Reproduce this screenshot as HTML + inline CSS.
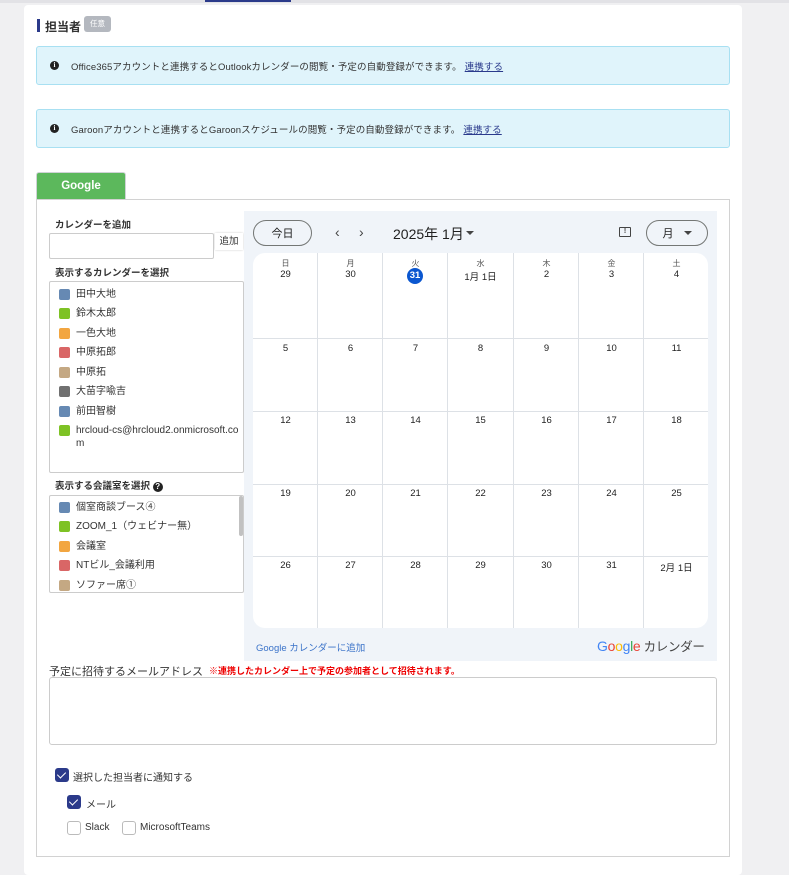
<!DOCTYPE html>
<html><head><meta charset="utf-8"><style>
*{box-sizing:border-box;margin:0;padding:0}
body{width:789px;height:867px;background:#f0f0f2;font-family:"Liberation Sans","Noto Sans CJK JP",sans-serif;color:#333;position:relative;overflow:hidden;font-size:10px}
.a{position:absolute}
.card{left:24px;top:5px;width:718px;height:870px;background:#fff;border-radius:4px}
.info{left:36px;width:694px;height:39px;background:#e0f4fb;border:1px solid #a8e0f2;border-radius:3px;font-size:9.5px;letter-spacing:0.1px;color:#333;padding-left:13px;display:flex;align-items:center}
.info i{display:inline-block;width:9px;height:9px;border-radius:50%;background:#222;color:#fff;font-style:normal;font-size:7px;font-weight:bold;text-align:center;line-height:9px;margin-right:12px;font-family:"Liberation Serif",serif}
.info a{color:#2a3a8c;text-decoration:underline;margin-left:3px}
.lbl{font-size:9.5px;font-weight:bold;color:#333}
.list{border:1px solid #ccc;border-radius:2px;background:#fff;overflow:hidden}
.it{position:absolute;left:9px;font-size:10px;display:flex;align-items:flex-start;line-height:13px}
.sw{width:11px;height:11px;border-radius:2px;margin-right:6px;margin-top:1px;flex:none}
.cal{left:244px;top:211px;width:473px;height:450px;background:#f0f4f9}
.grid{left:253px;top:253px;width:455px;height:375px;background:#fff;border-radius:12px;overflow:hidden}
.vl{position:absolute;top:0;width:1px;height:375px;background:#dde1e6}
.hl{position:absolute;left:0;width:455px;height:1px;background:#dde1e6}
.d{position:absolute;width:65px;text-align:center;font-size:9.5px;color:#222}
.wd{position:absolute;width:65px;text-align:center;font-size:8px;color:#555}
.pill{border:1px solid #747775;border-radius:14px;background:transparent;font-size:11px;color:#1f1f1f;display:flex;align-items:center;justify-content:center}
.cb{width:14px;height:14px;border-radius:3px;position:absolute}
.on{background:#2b3a8a}
.off{border:1px solid #bbb;background:#fff}
.on::after{content:"";position:absolute;left:4px;top:1.5px;width:4px;height:7px;border:solid #fff;border-width:0 1.5px 1.5px 0;transform:rotate(45deg)}
.ct{position:absolute;font-size:10px;color:#333}
</style></head><body>
<div class="a" style="left:0;top:0;width:789px;height:3px;background:#e2e2e6"></div>
<div class="a" style="left:205px;top:0;width:86px;height:2px;background:#2b3a8a"></div>
<div class="a card"></div>
<div class="a" style="left:37px;top:19px;width:3px;height:13px;background:#2b3a8a"></div>
<div class="a" style="left:45px;top:18px;font-size:12px;font-weight:bold;color:#333">担当者</div>
<div class="a" style="left:84px;top:16px;width:27px;height:16px;background:#b4b8bf;border-radius:3px;color:#fff;font-size:7.5px;text-align:center;line-height:16px">任意</div>
<div class="a info" style="top:46px"><i>i</i>Office365アカウントと連携するとOutlookカレンダーの閲覧・予定の自動登録ができます。<a>連携する</a></div>
<div class="a info" style="top:109px"><i>i</i>Garoonアカウントと連携するとGaroonスケジュールの閲覧・予定の自動登録ができます。<a>連携する</a></div>
<div class="a" style="left:36px;top:172px;width:90px;height:27px;background:#5cb85c;border:1px solid #cfd3d6;border-bottom:none;border-radius:3px 3px 0 0;color:#fff;font-size:11.5px;font-weight:bold;text-align:center;line-height:27px">Google</div>
<div class="a" style="left:36px;top:199px;width:694px;height:658px;border:1px solid #d2d2d2"></div>

<div class="a lbl" style="left:55px;top:217px">カレンダーを追加</div>
<div class="a" style="left:49px;top:233px;width:165px;height:26px;border:1px solid #ccc;border-radius:2px"></div>
<div class="a" style="left:215px;top:233px;width:28px;height:17px;background:#fff;font-size:9.5px;text-align:center;line-height:17px;box-shadow:0 0 2px #ccc">追加</div>
<div class="a lbl" style="left:55px;top:265px">表示するカレンダーを選択</div>
<div class="a list" style="left:49px;top:281px;width:195px;height:192px">
<div class="it" style="top:6px"><span class="sw" style="background:#6689b3"></span>田中大地</div>
<div class="it" style="top:25px"><span class="sw" style="background:#7ec225"></span>鈴木太郎</div>
<div class="it" style="top:45px"><span class="sw" style="background:#f2a640"></span>一色大地</div>
<div class="it" style="top:64px"><span class="sw" style="background:#d96666"></span>中原拓郎</div>
<div class="it" style="top:84px"><span class="sw" style="background:#c4a883"></span>中原拓</div>
<div class="it" style="top:103px"><span class="sw" style="background:#707070"></span>大苗字喩吉</div>
<div class="it" style="top:123px"><span class="sw" style="background:#6689b3"></span>前田智樹</div>
<div class="it" style="top:142px;width:185px"><span class="sw" style="background:#7ec225"></span><span style="word-break:break-all">hrcloud-cs@hrcloud2.onmicrosoft.com</span></div>
</div>
<div class="a lbl" style="left:55px;top:478px">表示する会議室を選択 <span style="display:inline-block;width:10px;height:10px;border-radius:50%;background:#222;color:#fff;font-size:8px;text-align:center;line-height:10px">?</span></div>
<div class="a list" style="left:49px;top:495px;width:195px;height:98px">
<div class="it" style="top:5px"><span class="sw" style="background:#6689b3"></span>個室商談ブース④</div>
<div class="it" style="top:24px"><span class="sw" style="background:#7ec225"></span>ZOOM_1（ウェビナー無）</div>
<div class="it" style="top:44px"><span class="sw" style="background:#f2a640"></span>会議室</div>
<div class="it" style="top:63px"><span class="sw" style="background:#d96666"></span>NTビル_会議利用</div>
<div class="it" style="top:83px"><span class="sw" style="background:#c4a883"></span>ソファー席①</div>
<div style="position:absolute;right:0;top:0;width:4px;height:40px;background:#c1c1c1;border-radius:2px"></div>
</div>

<div class="a cal"></div>
<div class="a pill" style="left:253px;top:220px;width:59px;height:26px">今日</div>
<div class="a" style="left:335px;top:224px;font-size:14px;color:#444">‹</div>
<div class="a" style="left:359px;top:224px;font-size:14px;color:#444">›</div>
<div class="a" style="left:393px;top:224px;font-size:14px;color:#1f1f1f">2025年 1月</div>
<div class="a" style="left:466px;top:231px;width:0;height:0;border-left:4px solid transparent;border-right:4px solid transparent;border-top:4px solid #444"></div>
<div class="a" style="left:619px;top:227px;width:12px;height:10px;border:1.5px solid #444;border-radius:1px;font-size:7px;text-align:center;line-height:7px;font-weight:bold;color:#444">!</div>
<div class="a pill" style="left:646px;top:220px;width:62px;height:26px">月<span style="display:inline-block;margin-left:10px;border-left:4px solid transparent;border-right:4px solid transparent;border-top:4px solid #444"></span></div>
<div class="a grid">
<div class="vl" style="left:64px"></div><div class="vl" style="left:129px"></div><div class="vl" style="left:194px"></div><div class="vl" style="left:260px"></div><div class="vl" style="left:325px"></div><div class="vl" style="left:390px"></div>
<div class="hl" style="top:85px"></div><div class="hl" style="top:158px"></div><div class="hl" style="top:231px"></div><div class="hl" style="top:303px"></div>
<div class="wd" style="left:0;top:5px">日</div><div class="wd" style="left:65px;top:5px">月</div><div class="wd" style="left:130px;top:5px">火</div><div class="wd" style="left:195px;top:5px">水</div><div class="wd" style="left:261px;top:5px">木</div><div class="wd" style="left:326px;top:5px">金</div><div class="wd" style="left:391px;top:5px">土</div>
<div class="d" style="left:0;top:16px">29</div><div class="d" style="left:65px;top:16px">30</div>
<div class="a" style="left:154px;top:15px;width:16px;height:16px;border-radius:50%;background:#0b57d0;color:#fff;font-size:9.5px;font-weight:bold;text-align:center;line-height:16px">31</div>
<div class="d" style="left:195px;top:16px">1月 1日</div><div class="d" style="left:261px;top:16px">2</div><div class="d" style="left:326px;top:16px">3</div><div class="d" style="left:391px;top:16px">4</div>
<div class="d" style="left:0;top:90px">5</div><div class="d" style="left:65px;top:90px">6</div><div class="d" style="left:130px;top:90px">7</div><div class="d" style="left:195px;top:90px">8</div><div class="d" style="left:261px;top:90px">9</div><div class="d" style="left:326px;top:90px">10</div><div class="d" style="left:391px;top:90px">11</div>
<div class="d" style="left:0;top:162px">12</div><div class="d" style="left:65px;top:162px">13</div><div class="d" style="left:130px;top:162px">14</div><div class="d" style="left:195px;top:162px">15</div><div class="d" style="left:261px;top:162px">16</div><div class="d" style="left:326px;top:162px">17</div><div class="d" style="left:391px;top:162px">18</div>
<div class="d" style="left:0;top:235px">19</div><div class="d" style="left:65px;top:235px">20</div><div class="d" style="left:130px;top:235px">21</div><div class="d" style="left:195px;top:235px">22</div><div class="d" style="left:261px;top:235px">23</div><div class="d" style="left:326px;top:235px">24</div><div class="d" style="left:391px;top:235px">25</div>
<div class="d" style="left:0;top:307px">26</div><div class="d" style="left:65px;top:307px">27</div><div class="d" style="left:130px;top:307px">28</div><div class="d" style="left:195px;top:307px">29</div><div class="d" style="left:261px;top:307px">30</div><div class="d" style="left:326px;top:307px">31</div><div class="d" style="left:391px;top:307px">2月 1日</div>
</div>
<div class="a" style="left:256px;top:640px;font-size:9.5px;color:#3b73c9">Google カレンダーに追加</div>
<div class="a" style="left:597px;top:636px;font-size:14px;letter-spacing:-0.3px"><span style="color:#4285f4">G</span><span style="color:#ea4335">o</span><span style="color:#fbbc05">o</span><span style="color:#4285f4">g</span><span style="color:#34a853">l</span><span style="color:#ea4335">e</span><span style="color:#444;font-size:12.5px"> カレンダー</span></div>

<div class="a" style="left:49px;top:663px;font-size:11px;color:#333">予定に招待するメールアドレス</div>
<div class="a" style="left:209px;top:664px;font-size:9px;color:#e00;font-weight:bold">※連携したカレンダー上で予定の参加者として招待されます。</div>
<div class="a" style="left:49px;top:677px;width:668px;height:68px;border:1px solid #ccc;border-radius:3px"></div>

<div class="cb on" style="left:55px;top:768px"></div><div class="ct" style="left:73px;top:769px">選択した担当者に通知する</div>
<div class="cb on" style="left:67px;top:795px"></div><div class="ct" style="left:86px;top:796px">メール</div>
<div class="cb off" style="left:67px;top:821px"></div><div class="ct" style="left:85px;top:822px">Slack</div>
<div class="cb off" style="left:122px;top:821px"></div><div class="ct" style="left:140px;top:822px">MicrosoftTeams</div>
</body></html>
